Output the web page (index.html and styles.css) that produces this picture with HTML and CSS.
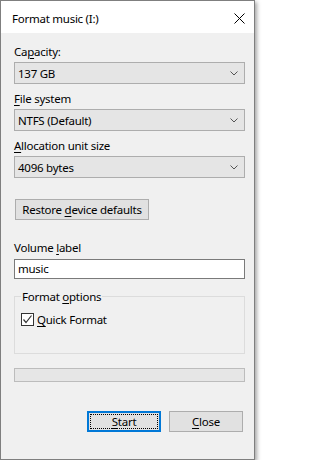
FILE: index.html
```html
<!DOCTYPE html>
<html>
<head>
<meta charset="utf-8">
<link rel="stylesheet" href="styles.css">
</head>
<body>
<div class="window">
  <div class="titlebar">
    <span class="title">Format music (I:)</span>
    <svg class="close" width="11" height="11" viewBox="0 0 11 11"><path d="M0.5 0.5 L10.5 10.5 M10.5 0.5 L0.5 10.5" stroke="#000" stroke-width="1" fill="none"/></svg>
  </div>
  <div class="content">
    <div class="label first">Ca<u>p</u>acity:</div>
    <div class="combo"><span>137 GB</span><svg class="chev" width="8" height="5" viewBox="0 0 8 5"><path d="M0.5 0.5 L4 4 L7.5 0.5" stroke="#555" stroke-width="1" fill="none"/></svg></div>
    <div class="label"><u>F</u>ile system</div>
    <div class="combo"><span>NTFS (Default)</span><svg class="chev" width="8" height="5" viewBox="0 0 8 5"><path d="M0.5 0.5 L4 4 L7.5 0.5" stroke="#555" stroke-width="1" fill="none"/></svg></div>
    <div class="label"><u>A</u>llocation unit size</div>
    <div class="combo"><span>4096 bytes</span><svg class="chev" width="8" height="5" viewBox="0 0 8 5"><path d="M0.5 0.5 L4 4 L7.5 0.5" stroke="#555" stroke-width="1" fill="none"/></svg></div>
    <div class="restore"><span>Restore <u>d</u>evice defaults</span></div>
    <div class="label vol">Volume <u>l</u>abel</div>
    <div class="input">music</div>
    <fieldset class="group">
      <legend>Format <u>o</u>ptions</legend>
      <div class="check-row">
        <span class="checkbox"><svg width="11" height="11" viewBox="0 0 11 11"><path d="M1.5 5.5 L4 8.5 L9.5 1.5" stroke="#333" stroke-width="1.2" fill="none"/></svg></span>
        <span><u>Q</u>uick Format</span>
      </div>
    </fieldset>
    <div class="progress"></div>
    <div class="buttons">
      <div class="btn start"><span class="focus"><span><u>S</u>tart</span></span></div>
      <div class="btn"><span><u>C</u>lose</span></div>
    </div>
  </div>
</div>
</body>
</html>
```
FILE: styles.css
```css
html, body {
  margin: 0;
  padding: 0;
  background: #ffffff;
}
body {
  font-family: "Noto Sans", "Open Sans", sans-serif;
  font-size: 11.5px;
  letter-spacing: -0.25px;
  color: #000;
}
u {
  text-decoration: underline;
  text-underline-offset: 2px;
}
.window {
  width: 255px;
  height: 460px;
  box-sizing: border-box;
  border: 1px solid #7f7f7f;
  background: #f0f0f0;
  box-shadow: 2px 2px 4px rgba(0, 0, 0, 0.35);
  display: flex;
  flex-direction: column;
}
.titlebar {
  height: 32px;
  background: #ffffff;
  display: flex;
  align-items: center;
  justify-content: space-between;
  padding: 0 9px 0 11px;
}
.title {
  line-height: 15px;
  margin-top: 2px;
}
.close {
  margin-top: 2px;
}
.content {
  padding: 0 9px 0 13px;
  display: flex;
  flex-direction: column;
}
.label {
  line-height: 15px;
  height: 15px;
  margin-top: 7px;
  margin-bottom: 3px;
}
.label.first {
  margin-top: 11px;
}
.combo {
  height: 22px;
  box-sizing: border-box;
  border: 1px solid #adadad;
  background: #e5e5e5;
  display: flex;
  align-items: center;
  justify-content: space-between;
  padding: 0 6px 0 3px;
  line-height: 15px;
}
.chev {
  display: block;
}
.restore {
  margin-top: 21px;
  margin-left: 1px;
  width: 134px;
  height: 21px;
  box-sizing: border-box;
  border: 1px solid #adadad;
  background: #e1e1e1;
  display: flex;
  align-items: center;
  justify-content: center;
  line-height: 15px;
}
.label.vol {
  margin-top: 20px;
  margin-bottom: 4px;
}
.input {
  height: 20px;
  box-sizing: border-box;
  border: 1px solid #7a7a7a;
  background: #ffffff;
  padding: 0 3px;
  line-height: 18px;
}
.group {
  margin: 10px 0 0 0;
  padding: 0 6px;
  height: 65px;
  box-sizing: border-box;
  border: 1px solid #dcdcdc;
  min-width: 0;
}
.group legend {
  padding: 0 1px;
  line-height: 15px;
}
.check-row {
  display: flex;
  align-items: center;
  gap: 3px;
  margin-top: 8px;
  line-height: 15px;
}
.checkbox {
  width: 13px;
  height: 13px;
  box-sizing: border-box;
  border: 1px solid #333;
  background: #fff;
  display: flex;
  align-items: center;
  justify-content: center;
}
.checkbox svg {
  display: block;
}
.progress {
  margin-top: 14px;
  height: 14px;
  box-sizing: border-box;
  border: 1px solid #bcbcbc;
  background: #e6e6e6;
}
.buttons {
  margin-top: 29px;
  display: flex;
  justify-content: flex-end;
  gap: 8px;
  margin-right: 2px;
}
.btn {
  width: 74px;
  height: 21px;
  box-sizing: border-box;
  border: 1px solid #adadad;
  background: #e1e1e1;
  display: flex;
  align-items: center;
  justify-content: center;
  line-height: 15px;
}
.btn.start {
  border: 2px solid #0078d7;
  padding: 1px;
}
.focus {
  flex: 1;
  align-self: stretch;
  border: 1px dotted #000;
  display: flex;
  align-items: center;
  justify-content: center;
}
```
